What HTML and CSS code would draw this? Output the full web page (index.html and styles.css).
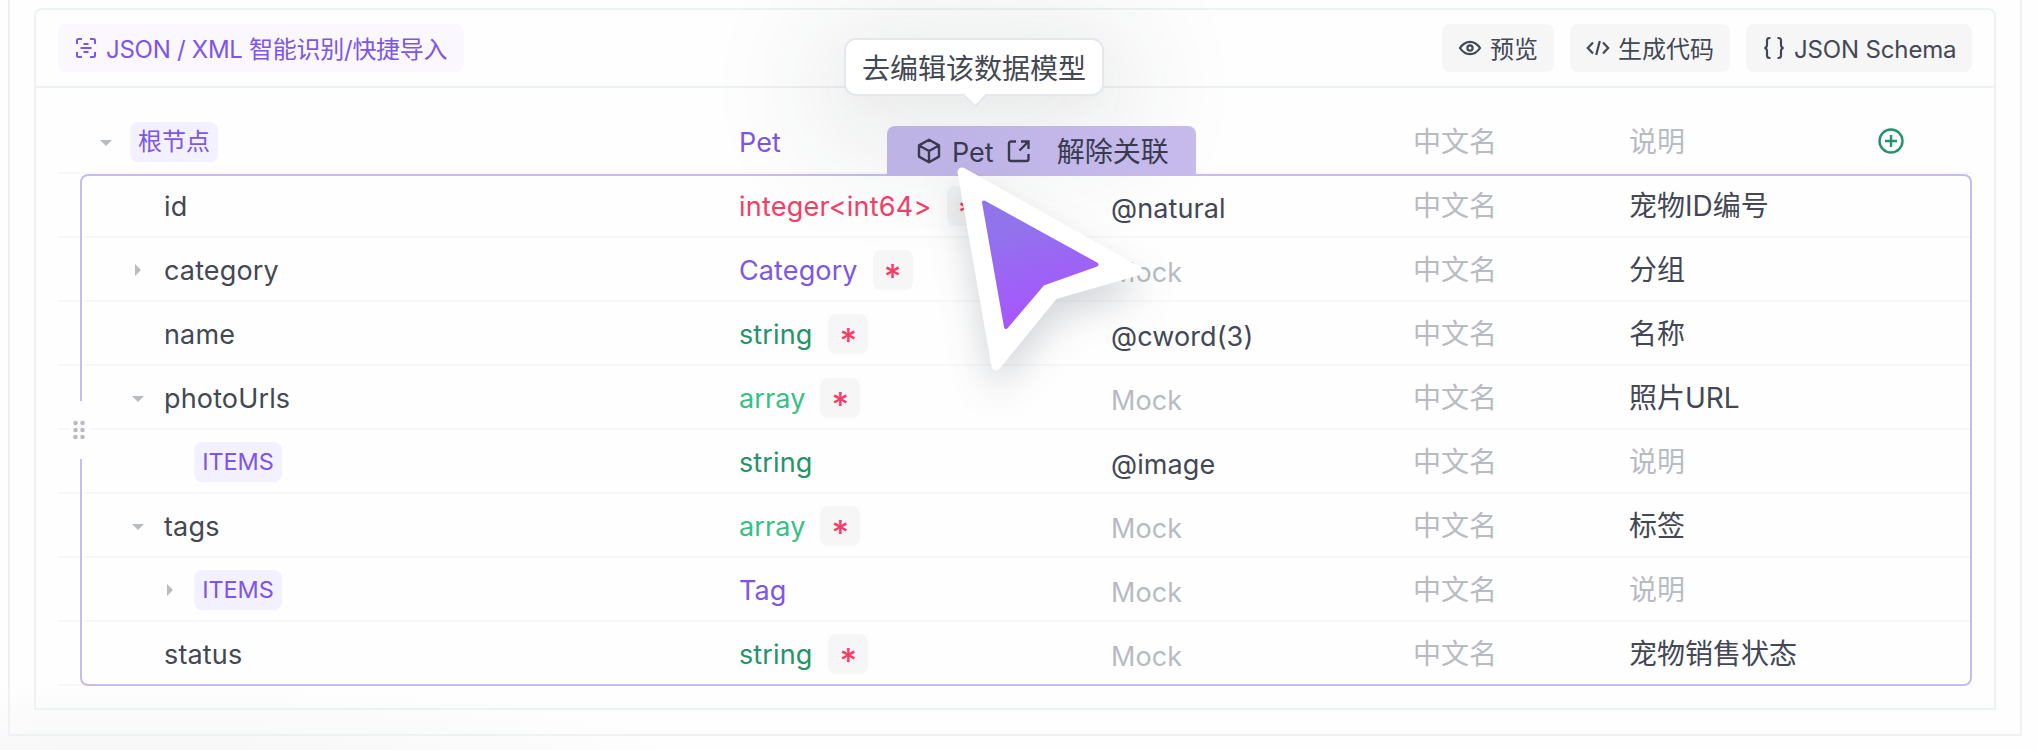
FILE: index.html
```html
<!DOCTYPE html>
<html lang="zh">
<head>
<meta charset="utf-8">
<title>Pet</title>
<link rel="stylesheet" href="styles.css">
</head>
<body>
<div class="outer">
  <div class="panel">
    <header class="toolbar">
      <button class="btn import">
        <svg width="22" height="22" viewBox="0 0 22 22" fill="none" stroke="currentColor" stroke-width="2"><path d="M2 7V3.500Q2 2 3.500 2H7M15 2h3.500Q20 2 20 3.500V7M20 15v3.500q0 1.500-1.500 1.500H15M7 20H3.500Q2 20 2 18.500V15M8.500 7h5M5.500 11h11M8.500 15h5"/></svg>
        <span>JSON / XML 智能识别/快捷导入</span>
      </button>
      <div class="actions">
        <button class="btn preview">
          <svg width="24" height="24" viewBox="0 0 24 24" fill="none" stroke="currentColor" stroke-width="2.200"><path d="M2 12Q6 5.800 12 5.800T22 12Q18 18.200 12 18.200T2 12Z"/><circle cx="12" cy="12" r="2.600"/></svg>
          <span>预览</span>
        </button>
        <button class="btn codegen">
          <svg width="24" height="24" viewBox="0 0 24 24" fill="none" stroke="currentColor" stroke-width="2.200"><path d="M7 6.500 1.800 12 7 17.500M17 6.500l5.200 5.500-5.200 5.500M13.800 5l-3.600 14"/></svg>
          <span>生成代码</span>
        </button>
        <button class="btn schema">
          <svg width="24" height="30" viewBox="0 0 24 30" fill="none" stroke="currentColor" stroke-width="2.200"><path d="M8.500 5H7.500Q5 5 5 7.500v4.500Q5 14.500 2.500 15 5 15.500 5 18V22.500q0 2.500 2.500 2.500h1M15.500 5h1Q19 5 19 7.500v4.500q0 2.500 2.500 3Q19 15.500 19 18V22.500q0 2.500-2.500 2.500h-1"/></svg>
          <span>JSON Schema</span>
        </button>
      </div>
    </header>
    <main class="tree">
      <div class="row root">
        <div class="name"><i class="caret down"></i><span class="tag">根节点</span></div>
        <div class="type model">Pet</div><div class="mock"></div><div class="cn">中文名</div><div class="desc empty">说明</div>
        <svg class="add" width="26" height="26" viewBox="0 0 26 26" fill="none" stroke="currentColor" stroke-width="2.400"><circle cx="13" cy="13" r="11.500"/><path d="M13 7v12M7 13h12"/></svg>
      </div>
      <div class="row">
        <div class="name l1">id</div>
        <div class="type int">integer&lt;int64&gt;<b class="req">*</b></div><div class="mock set">@natural</div><div class="cn">中文名</div><div class="desc">宠物ID编号</div>
      </div>
      <div class="row">
        <div class="name l1"><i class="caret"></i>category</div>
        <div class="type model">Category<b class="req">*</b></div><div class="mock">Mock</div><div class="cn">中文名</div><div class="desc">分组</div>
      </div>
      <div class="row">
        <div class="name l1">name</div>
        <div class="type str">string<b class="req">*</b></div><div class="mock set">@cword(3)</div><div class="cn">中文名</div><div class="desc">名称</div>
      </div>
      <div class="row">
        <div class="name l1"><i class="caret down"></i>photoUrls</div>
        <div class="type arr">array<b class="req">*</b></div><div class="mock">Mock</div><div class="cn">中文名</div><div class="desc">照片URL</div>
      </div>
      <div class="row">
        <div class="name l2"><span class="tag items">ITEMS</span></div>
        <div class="type str">string</div><div class="mock set">@image</div><div class="cn">中文名</div><div class="desc empty">说明</div>
      </div>
      <div class="row">
        <div class="name l1"><i class="caret down"></i>tags</div>
        <div class="type arr">array<b class="req">*</b></div><div class="mock">Mock</div><div class="cn">中文名</div><div class="desc">标签</div>
      </div>
      <div class="row">
        <div class="name l2"><i class="caret"></i><span class="tag items">ITEMS</span></div>
        <div class="type model">Tag</div><div class="mock">Mock</div><div class="cn">中文名</div><div class="desc empty">说明</div>
      </div>
      <div class="row">
        <div class="name l1">status</div>
        <div class="type str">string<b class="req">*</b></div><div class="mock">Mock</div><div class="cn">中文名</div><div class="desc">宠物销售状态</div>
      </div>
      <div class="scope"></div>
      <div class="grip"><svg width="12" height="20" viewBox="0 0 12 20" fill="#b8bbc1"><circle cx="2.500" cy="3" r="2.300"/><circle cx="9.500" cy="3" r="2.300"/><circle cx="2.500" cy="10" r="2.300"/><circle cx="9.500" cy="10" r="2.300"/><circle cx="2.500" cy="17" r="2.300"/><circle cx="9.500" cy="17" r="2.300"/></svg></div>
    </main>
  </div>
</div>
<div class="tooltip">去编辑该数据模型</div>
<div class="link-tab">
  <svg class="cube" width="24" height="26" viewBox="0 0 24 26" fill="none" stroke="currentColor" stroke-width="2.400" stroke-linejoin="round"><path d="M12 1.800 22 7.400v11.200L12 24.200 2 18.600V7.400ZM2.500 7.700 12 13l9.500-5.300M12 13v11"/></svg>
  <span class="model-name">Pet</span>
  <svg class="open" width="24" height="24" viewBox="0 0 24 24" fill="none" stroke="currentColor" stroke-width="2.400"><path d="M9 2.500H4Q2 2.500 2 4.500v15.500q0 2 2 2h15.500q2 0 2-2v-5M14 2.500h7.500V10M21.500 2.500 12.500 11.500"/></svg>
  <span class="unlink">解除关联</span>
</div>
<svg class="cursor" width="300" height="300" viewBox="900 130 300 300">
  <defs><linearGradient id="g" x1="0" y1="0" x2=".25" y2="1"><stop offset=".25" stop-color="#9173ec"/><stop offset="1" stop-color="#a855ff"/></linearGradient></defs>
  <path d="M962 172 1138 271 1054 295 996 366Z" fill="#fff" stroke="#fff" stroke-width="9" stroke-linejoin="round"/>
  <path d="M984 202.500 1096.500 264.500 1043 283.500 1006 327Z" fill="url(#g)" stroke="url(#g)" stroke-width="4" stroke-linejoin="round"/>
</svg>
</body>
</html>
```

FILE: styles.css
```css
* { box-sizing: border-box; }
body {
  margin: 0;
  width: 2038px;
  height: 750px;
  overflow: hidden;
  position: relative;
  background: radial-gradient(ellipse 560px 90px at 150px 775px, #f4f4f4, #fff0), #fefefe;
  color: #434854;
  font: 27px/36px Inter, "Noto Sans CJK SC", sans-serif;
}
.outer {
  margin: 0 16px 0 8px;
  height: 736px;
  padding: 8px 24px 0;
  border: 2px solid #eef2f6;
  border-top: 0;
}
.panel {
  height: 702px;
  border: 2px solid #edf2f3;
  border-radius: 8px 8px 0 0;
}
.toolbar {
  height: 78px;
  padding: 14px 22px 0;
  display: flex;
  justify-content: space-between;
  align-items: flex-start;
  border-bottom: 2px solid #edf2f3;
}
.actions { display: flex; gap: 16px; }
.btn {
  height: 48px;
  padding: 0 0 0 16px;
  display: flex;
  align-items: center;
  gap: 8px;
  border: 0;
  border-radius: 8px;
  background: #f6f6f6;
  color: #434854;
  font: 24px/44px Inter, "Noto Sans CJK SC", sans-serif;
  white-space: nowrap;
}
.btn span { padding-top: 4px; }
.preview { width: 112px; }
.codegen { width: 160px; }
.schema { width: 226px; letter-spacing: -.15px; }
.btn.import {
  width: 406px;
  padding-left: 17px;
  gap: 9px;
  background: #faf7ff;
  color: #7d55e7;
  letter-spacing: -.27px;
}
.tree { position: relative; padding: 22px 22px 0; }
.row {
  height: 64px;
  display: grid;
  grid-template-columns: 681px 372px 302px 216px 249px 1fr;
  align-items: center;
  border-bottom: 2px solid #f8f8f9;
}
.name { display: flex; align-items: center; padding: 2px 0 0 72px; position: relative; letter-spacing: .15px; }
.name.l1 { padding: 3px 0 0 106px; }
.name.l2 { padding-left: 136px; }
.tag {
  width: 88px;
  height: 40px;
  border-radius: 8px;
  background: #f3f0ff;
  color: #7d55e7;
  font-size: 24px;
  line-height: 40px;
  letter-spacing: 0;
  text-align: center;
  white-space: nowrap;
}
.items { font-size: 23.500px; letter-spacing: -.1px; }
.caret {
  position: absolute;
  left: 42px;
  top: 50%;
  margin-top: -1px;
  border: 6px solid transparent;
  border-top-color: #b8bbc1;
  border-bottom: 0;
}
.l1 .caret { left: 74px; }
.l2 .caret { left: 109px; }
.caret:not(.down) { border: 6px solid transparent; border-left-color: #b8bbc1; border-right: 0; margin-top: -5px; }
.l1 .caret:not(.down) { left: 77px; }
.type { display: flex; align-items: center; gap: 15px; line-height: 37px; padding-top: 3px; letter-spacing: .12px; }
.model { color: #7d55e7; }
.int { color: #f63d68; letter-spacing: .22px; }
.str { color: #24936a; gap: 16px; }
.arr { color: #36bf86; }
.req {
  width: 40px;
  height: 40px;
  margin-top: -1px;
  border-radius: 8px;
  background: #f6f6f6;
  color: #f63d68;
  font: 500 34px/53px Inter, sans-serif;
  letter-spacing: 0;
  text-align: center;
}
.cn, .mock, .empty { color: #b8bbc1; }
.cn, .desc { padding-top: 1px; font-size: 28px; }
.mock.set { color: #434854; }
.mock { padding-top: 7px; letter-spacing: .1px; }
.add { color: #24936a; }
.scope {
  position: absolute;
  left: 44px;
  right: 22px;
  top: 86px;
  height: 512px;
  border: 2px solid #c7bbef;
  border-radius: 8px;
}
.grip {
  position: absolute;
  left: 34px;
  top: 313px;
  width: 20px;
  height: 58px;
  padding: 0 2px 0 0;
  background: #fefefe;
  display: flex;
  align-items: center;
  justify-content: center;
}
.link-tab {
  position: absolute;
  left: 887px;
  top: 126px;
  width: 309px;
  height: 50px;
  padding: 2px 0 0 30px;
  display: flex;
  align-items: center;
  border-radius: 8px 8px 0 0;
  background: linear-gradient(90deg, #bdb2e4, #c7bbee);
  color: #393a50;
  white-space: nowrap;
}
.model-name { margin: 2px 13px 0 11px; }
.link-tab .cube, .link-tab .open { margin-top: -3px; }
.open { margin-right: 26px; }
.unlink { font-size: 28px; }
.tooltip {
  position: absolute;
  left: 844px;
  top: 38px;
  width: 260px;
  height: 58px;
  border: 2px solid #e5e7ee;
  border-radius: 12px;
  background: #fff;
  font-size: 28px;
  line-height: 58px;
  text-align: center;
  white-space: nowrap;
  box-shadow: 0 20px 120px 30px rgba(40, 50, 50, .1), 0 10px 24px rgba(0, 0, 0, .02);
}
.tooltip::after {
  content: "";
  position: absolute;
  left: 120px;
  top: 46px;
  width: 16px;
  height: 16px;
  background: #fff;
  border: solid #e5e7ee;
  border-width: 0 2px 2px 0;
  transform: rotate(45deg);
}
.cursor {
  position: absolute;
  left: 900px;
  top: 130px;
  filter: drop-shadow(0 18px 18px rgba(40, 50, 70, .2));
}
```
